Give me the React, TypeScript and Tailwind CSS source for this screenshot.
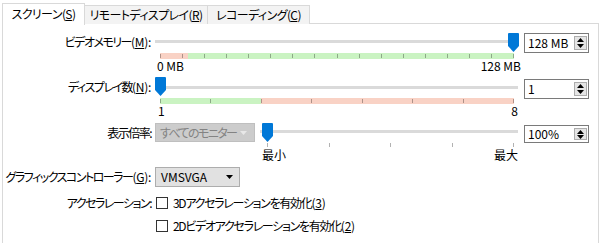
import React from 'react';

const FONT = "font-['Noto_Sans_CJK_JP','Noto_Sans',sans-serif] [font-feature-settings:'palt']";

const Thumb = () => (
  <svg width="11" height="19" viewBox="0 0 11 19" className="block">
    <path d="M1 0 H10 A1 1 0 0 1 11 1 V13 L5.5 19 L0 13 V1 A1 1 0 0 1 1 0 Z" fill="#0078d7" />
  </svg>
);

const Arrow = ({ up, color = '#000' }: { up?: boolean; color?: string }) => (
  <svg width="7" height="4" viewBox="0 0 7 4" className="block">
    <path d={up ? 'M0 4 L3.5 0 L7 4 Z' : 'M0 0 L7 0 L3.5 4 Z'} fill={color} />
  </svg>
);

const SpinBox = ({ value, className = '' }: { value: string; className?: string }) => (
  <div className={`w-[65px] border border-[#7a7a7a] bg-white flex items-center pl-[3px] pr-[1px] ${className}`}>
    <span className="flex-1 leading-none">{value}</span>
    <div className="w-[13px] h-[calc(100%-4px)] border border-[#adadad] bg-[#e5e5e5] flex flex-col">
      <div className="flex-1 flex items-center justify-center">
        <Arrow up />
      </div>
      <div className="flex-1 flex items-center justify-center">
        <Arrow />
      </div>
    </div>
  </div>
);

// mnemonic suffix like (M): with a looser spacing than the kana
const Key = ({ k, colon }: { k: string; colon?: boolean }) => (
  <span className="tracking-[-0.3px]">
    (<u>{k}</u>){colon ? ':' : ''}
  </span>
);

const Label = ({ children, className = '' }: { children: React.ReactNode; className?: string }) => (
  <div className={`w-[148px] shrink-0 flex items-center justify-end whitespace-nowrap tracking-[-1.5px] ${className}`}>{children}</div>
);

const Ticks = ({ count, className = '' }: { count: number; className?: string }) => (
  <div className={`flex justify-between ${className}`}>
    {Array.from({ length: count }).map((_, i) => (
      <div key={i} className="w-px h-full bg-black/30" />
    ))}
  </div>
);

const CheckRow = ({ label, children, className = '' }: { label?: string; children: React.ReactNode; className?: string }) => (
  <div className={`flex h-[12px] ${className}`}>
    <Label>{label}</Label>
    <div className="ml-[5px] w-[12px] h-[12px] border border-[#333] bg-white shrink-0" />
    <div className="ml-[5px] flex items-center whitespace-nowrap tracking-[-1.3px]">{children}</div>
  </div>
);

export default function App() {
  return (
    <div className={`w-[603px] h-[244px] bg-white overflow-hidden text-[12px] text-black ${FONT}`}>
      {/* tabs */}
      <div className="h-[24px] flex items-end pl-[2px] relative z-10 tracking-[-0.6px]">
        <div className="w-[83px] h-[22px] border border-b-0 border-[#d9d9d9] bg-white flex items-center justify-center mb-[-1px] pb-[1px]">
          スクリーン(<u>S</u>)
        </div>
        <div className="w-[123px] h-[19px] border-t border-r border-[#d9d9d9] bg-[#f3f3f3] flex items-center justify-center">
          リモートディスプレイ(<u>R</u>)
        </div>
        <div className="w-[102px] h-[19px] border-t border-r border-[#d9d9d9] bg-[#f3f3f3] flex items-center justify-center">
          レコーディング(<u>C</u>)
        </div>
      </div>

      {/* panel */}
      <div className="ml-[2px] w-[597px] h-[220px] border-t border-x border-[#d9d9d9] mt-[-1px] flex flex-col">
        {/* video memory */}
        <div className="flex h-[20px] mt-[8px]">
          <Label>
            ビデオメモリー<Key k="M" colon />
          </Label>
          <div className="ml-[4px] w-[363px] relative">
            <div className="mt-[8px] h-[3px] bg-[#dadada]" />
            <div className="absolute left-[353px] top-[1px]">
              <Thumb />
            </div>
          </div>
          <SpinBox value="128 MB" className="ml-[6px] h-[20px] mt-[1px]" />
        </div>
        <div className="ml-[157px] w-[354px] h-[6px] mt-[1px] bg-[linear-gradient(to_right,#f9d2c5_28px,#caf3c2_28px)] py-[1px]">
          <Ticks count={17} className="h-full" />
        </div>
        <div className="ml-[154px] w-[364px] h-[12px] mt-[1px] flex justify-between leading-[12px]">
          <span>0 MB</span>
          <span>128 MB</span>
        </div>

        {/* monitor count */}
        <div className="flex h-[20px] mt-[5px]">
          <Label>
            ディスプレイ数<Key k="N" colon />
          </Label>
          <div className="ml-[4px] w-[363px] relative">
            <div className="mt-[9px] h-[3px] bg-[#dadada]" />
            <div className="absolute left-[0px] top-0">
              <Thumb />
            </div>
          </div>
          <SpinBox value="1" className="ml-[6px] h-[20px] mt-[2px]" />
        </div>
        <div className="ml-[157px] w-[354px] h-[6px] mt-[1px] bg-[linear-gradient(to_right,#caf3c2_101px,#f9d2c5_101px)] py-[1px]">
          <Ticks count={8} className="h-full" />
        </div>
        <div className="ml-[155px] w-[360px] h-[12px] mt-[1px] flex justify-between leading-[12px]">
          <span>1</span>
          <span>8</span>
        </div>

        {/* scale factor */}
        <div className="flex h-[20px] mt-[6px]">
          <Label>表示倍率:</Label>
          <div className="ml-[4px] w-[100px] h-[19px] border border-[#bfbfbf] bg-[#cccccc] text-[#838383] flex items-center pl-[4px] pr-[7px] tracking-[-1.6px]">
            <span className="flex-1 whitespace-nowrap">すべてのモニター</span>
            <Arrow color="#e8e8e8" />
          </div>
          <div className="ml-[5px] w-[258px] relative">
            <div className="mt-[7px] h-[3px] bg-[#dadada]" />
            <div className="absolute left-[2px] top-0">
              <Thumb />
            </div>
          </div>
          <SpinBox value="100%" className="ml-[6px] h-[18px] mt-[2px]" />
        </div>
        <Ticks count={5} className="ml-[264px] w-[247px] h-[4px]" />
        <div className="ml-[259px] w-[256px] h-[12px] mt-[2px] flex justify-between leading-[12px]">
          <span>最小</span>
          <span>最大</span>
        </div>

        {/* graphics controller */}
        <div className="flex h-[20px] mt-[6px]">
          <Label>
            グラフィックスコントローラー<Key k="G" colon />
          </Label>
          <div className="ml-[4px] w-[85px] h-[20px] border border-[#adadad] bg-[#e1e1e1] flex items-center pl-[5px] pr-[6px]">
            <span className="flex-1">VMSVGA</span>
            <Arrow />
          </div>
        </div>

        {/* acceleration */}
        <CheckRow label="アクセラレーション:" className="mt-[10px]">
          3Dアクセラレーションを有効化<Key k="3" />
        </CheckRow>
        <CheckRow className="mt-[11px]">
          2Dビデオアクセラレーションを有効化<Key k="2" />
        </CheckRow>
      </div>
    </div>
  );
}
